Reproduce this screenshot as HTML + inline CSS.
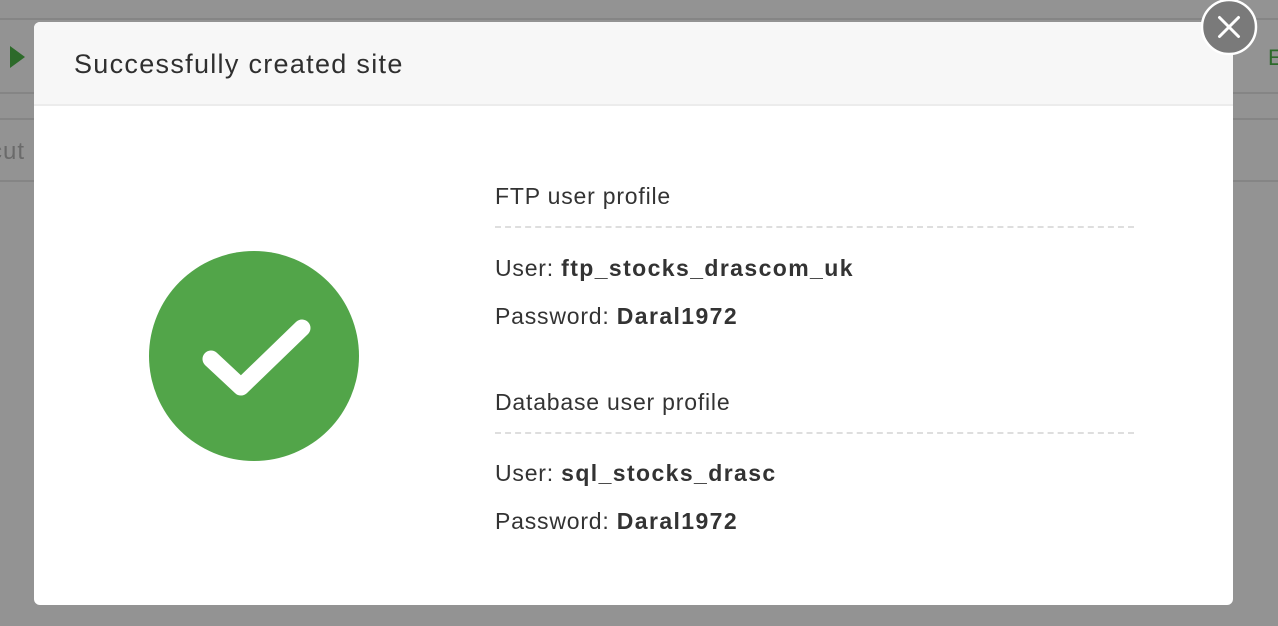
<!DOCTYPE html>
<html><head><meta charset="utf-8"><style>
html,body{margin:0;padding:0;width:1278px;height:626px;overflow:hidden;background:#939393;font-family:"Liberation Sans",Arial,sans-serif;position:relative}
.abs{position:absolute}
.line{position:absolute;left:0;width:1278px;height:2px;background:#858585}
.modal{position:absolute;left:34px;top:22px;width:1199px;height:583px;background:#fff;border-radius:6px;overflow:hidden}
.hdr{position:absolute;left:0;top:0;width:100%;height:82px;background:#f7f7f7;border-bottom:2px solid #ececec}
.title{position:absolute;left:40px;top:27px;font-size:27px;color:#2f2f2f;line-height:30px;letter-spacing:1.3px}
.t{position:absolute;left:495px;font-size:23px;color:#333;line-height:26px;white-space:nowrap;letter-spacing:0.8px}
.t b{font-weight:bold;letter-spacing:1.4px}
.dash{position:absolute;left:495px;width:639px;border-top:2px dashed #dedede;height:0}
</style></head><body>
<div class="line" style="top:18px"></div>
<div class="line" style="top:92px"></div>
<div class="line" style="top:118px"></div>
<div class="line" style="top:180px"></div>
<svg class="abs" style="left:8px;top:45px" width="20" height="24"><polygon points="2,1 17,12 2,23" fill="#2d6a2a"/></svg>
<div class="abs" style="left:-10px;top:138px;font-size:24px;color:#6a6a6a;letter-spacing:1px">cut</div>
<div class="abs" style="left:1268px;top:45px;font-size:22px;color:#2d6a2a">E</div>
<div class="modal">
  <div class="hdr"><div class="title">Successfully created site</div></div>
</div>
<svg class="abs" style="left:149px;top:251px" width="210" height="210">
  <circle cx="105" cy="105" r="105" fill="#52a549"/>
  <polyline points="62,108 92,136 153,77" fill="none" stroke="#fff" stroke-width="17" stroke-linecap="round" stroke-linejoin="round"/>
</svg>
<div class="t" style="top:183px">FTP user profile</div>
<div class="dash" style="top:226px"></div>
<div class="t" style="top:255px">User: <b>ftp_stocks_drascom_uk</b></div>
<div class="t" style="top:303px">Password: <b>Daral1972</b></div>
<div class="t" style="top:389px">Database user profile</div>
<div class="dash" style="top:432px"></div>
<div class="t" style="top:460px">User: <b>sql_stocks_drasc</b></div>
<div class="t" style="top:508px">Password: <b>Daral1972</b></div>
<svg class="abs" style="left:1199px;top:-3px" width="60" height="60">
  <circle cx="30" cy="30" r="27" fill="#7a7a7a" stroke="#fff" stroke-width="2.5"/>
  <path d="M20.5 20.5 L39.5 39.5 M39.5 20.5 L20.5 39.5" stroke="#fff" stroke-width="3" stroke-linecap="round"/>
</svg>
</body></html>
